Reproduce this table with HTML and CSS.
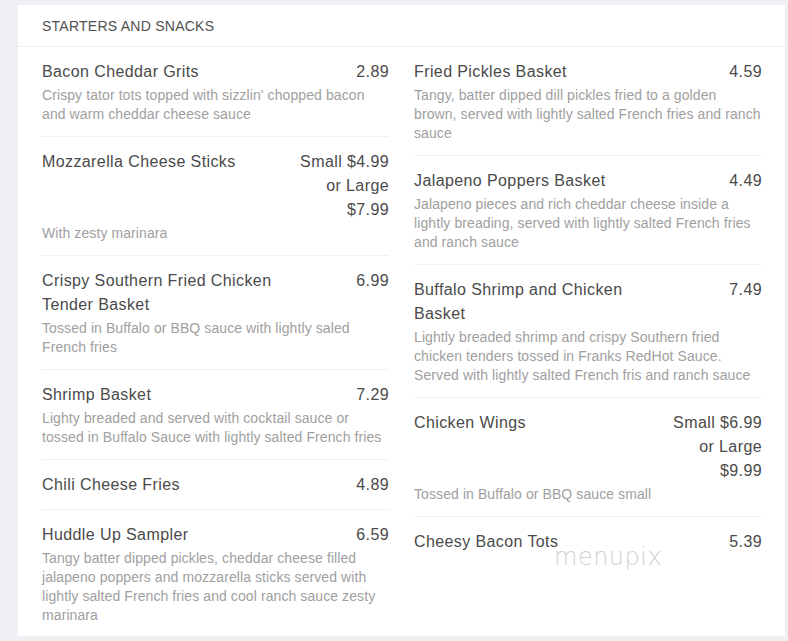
FILE: index.html
```html
<!DOCTYPE html>
<html>
<head>
<meta charset="utf-8">
<link rel="stylesheet" href="styles.css">
</head>
<body>
<div class="page">
  <section class="card">
    <header class="card-head">STARTERS AND SNACKS</header>
    <div class="cols">
      <ul class="list">
        <li class="item">
          <div class="row"><span class="name">Bacon Cheddar Grits</span><span class="price">2.89</span></div>
          <p class="desc">Crispy tator tots topped with sizzlin' chopped bacon and warm cheddar cheese sauce</p>
        </li>
        <li class="item">
          <div class="row"><span class="name">Mozzarella Cheese Sticks</span><span class="price">Small $4.99 or Large $7.99</span></div>
          <p class="desc">With zesty marinara</p>
        </li>
        <li class="item">
          <div class="row"><span class="name">Crispy Southern Fried Chicken Tender Basket</span><span class="price">6.99</span></div>
          <p class="desc">Tossed in Buffalo or BBQ sauce with lightly saled French fries</p>
        </li>
        <li class="item">
          <div class="row"><span class="name">Shrimp Basket</span><span class="price">7.29</span></div>
          <p class="desc">Lighty breaded and served with cocktail sauce or tossed in Buffalo Sauce with lightly salted French fries</p>
        </li>
        <li class="item">
          <div class="row"><span class="name">Chili Cheese Fries</span><span class="price">4.89</span></div>
        </li>
        <li class="item">
          <div class="row"><span class="name">Huddle Up Sampler</span><span class="price">6.59</span></div>
          <p class="desc">Tangy batter dipped pickles, cheddar cheese filled jalapeno poppers and mozzarella sticks served with lightly salted French fries and cool ranch sauce zesty marinara</p>
        </li>
      </ul>
      <ul class="list">
        <li class="item">
          <div class="row"><span class="name">Fried Pickles Basket</span><span class="price">4.59</span></div>
          <p class="desc">Tangy, batter dipped dill pickles fried to a golden brown, served with lightly salted French fries and ranch sauce</p>
        </li>
        <li class="item">
          <div class="row"><span class="name">Jalapeno Poppers Basket</span><span class="price">4.49</span></div>
          <p class="desc">Jalapeno pieces and rich cheddar cheese inside a lightly breading, served with lightly salted French fries and ranch sauce</p>
        </li>
        <li class="item">
          <div class="row"><span class="name">Buffalo Shrimp and Chicken Basket</span><span class="price">7.49</span></div>
          <p class="desc">Lightly breaded shrimp and crispy Southern fried chicken tenders tossed in Franks RedHot Sauce. Served with lightly salted French fris and ranch sauce</p>
        </li>
        <li class="item">
          <div class="row"><span class="name">Chicken Wings</span><span class="price">Small $6.99 or Large $9.99</span></div>
          <p class="desc">Tossed in Buffalo or BBQ sauce small</p>
        </li>
        <li class="item">
          <div class="row"><span class="name">Cheesy Bacon Tots</span><span class="price">5.39</span></div>
        </li>
      </ul>
    </div>
    <span class="watermark">menupix</span>
  </section>
</div>
</body>
</html>
```

FILE: styles.css
```css
html, body {
  margin: 0;
  padding: 0;
  background: #eff0f4;
}
body {
  font-family: "Liberation Sans", Arial, sans-serif;
  color: #4a4a4a;
}
.page {
  padding: 5px 3px 0 18px;
  height: 641px;
  box-sizing: border-box;
  overflow: hidden;
}
.card {
  position: relative;
  background: #fff;
  height: 631px;
}
.card-head {
  font-size: 14px;
  line-height: 19px;
  letter-spacing: 0.25px;
  color: #505050;
  padding: 12px 24px 10px;
  border-bottom: 1px solid #eef0f2;
}
.cols {
  display: grid;
  grid-template-columns: 347px 348px;
  column-gap: 25px;
  padding: 0 23px 0 24px;
}
.list {
  list-style: none;
  margin: 0;
  padding: 0;
}
.item {
  padding: 13px 0 12px;
  border-bottom: 1px solid #eef0f2;
}
.item:last-child {
  border-bottom: none;
}
.row {
  display: flex;
  justify-content: space-between;
  align-items: flex-start;
  font-size: 16px;
  line-height: 24px;
  letter-spacing: 0.4px;
  color: #4a4a4a;
}
.name {
  max-width: 245px;
}
.price {
  max-width: 100px;
  text-align: right;
  flex-shrink: 0;
}
.desc {
  margin: 2px 0 0;
  font-size: 14px;
  line-height: 19px;
  letter-spacing: 0.09px;
  color: #a0a0a0;
}
.watermark {
  position: absolute;
  left: 536px;
  top: 538px;
  font-family: "DejaVu Sans", sans-serif;
  font-weight: 200;
  font-size: 24px;
  letter-spacing: 0.5px;
  color: #d2d2d2;
}
```
